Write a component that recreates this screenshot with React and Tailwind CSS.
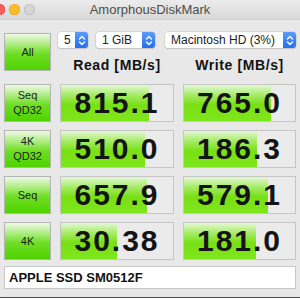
const rows = [
  { label: ["Seq", "QD32"], read: "815.1", readW: 88, write: "765.0", writeW: 87 },
  { label: ["4K", "QD32"], read: "510.0", readW: 84, write: "186.3", writeW: 73 },
  { label: ["Seq"], read: "657.9", readW: 86, write: "579.1", writeW: 84 },
  { label: ["4K"], read: "30.38", readW: 56, write: "181.0", writeW: 72 },
];

function Chevrons() {
  return (
    <svg width="8" height="11" viewBox="0 0 8 11" fill="none" stroke="white" strokeWidth="1.4" strokeLinecap="round" strokeLinejoin="round">
      <path d="M1.5 4 L4 1.5 L6.5 4" />
      <path d="M1.5 7 L4 9.5 L6.5 7" />
    </svg>
  );
}

function Select({ text, className }) {
  return (
    <div className={`flex h-[16px] items-center justify-between rounded-[3px] bg-white pl-[6px] shadow-[0_0_0_0.5px_#c4c4c4,0_1px_1px_rgba(0,0,0,0.15)] ${className}`}>
      <span className="text-[12px] leading-none text-[#222]">{text}</span>
      <div className="flex h-full w-[13px] items-center justify-center rounded-r-[3px] bg-gradient-to-b from-[#5a9cf8] to-[#1f6ff0]">
        <Chevrons />
      </div>
    </div>
  );
}

function GreenButton({ lines, className }) {
  return (
    <div
      className={`flex flex-col items-center justify-center border border-[#b4b4b4] bg-[linear-gradient(to_bottom,#eef9e6_0%,#b6ee8e_25%,#6ede24_55%,#4fd300_100%)] text-[11px] leading-[15px] text-[#1c1c1c] ${className}`}
    >
      {lines.map((l) => (
        <span key={l}>{l}</span>
      ))}
    </div>
  );
}

function Cell({ value, width }) {
  return (
    <div className="relative flex h-[38px] items-center justify-center border border-[#c6c6c6] bg-[#ebebeb]">
      <div
        className="absolute left-0 top-0 h-full bg-[linear-gradient(to_bottom,#e4f7d6_0%,#a6ec66_28%,#78e014_55%,#7ee61c_100%)]"
        style={{ width }}
      />
      <span className="relative text-[30px] font-bold leading-none tracking-[2px] text-[#141414]">
        {value}
      </span>
    </div>
  );
}

export default function App() {
  return (
    <div className="h-[300px] w-[300px] overflow-hidden bg-white font-['Liberation_Sans',Arial,sans-serif]">
      <div className="h-[298px] border-b border-[#4a4a4a] bg-[#e8e8e8]">
        <div className="relative flex h-[20px] items-center border-b border-[#cfcfcf] bg-[linear-gradient(to_bottom,#ececec,#d9d9d9)]">
          <div className="ml-[-6px] flex gap-[4px]">
            <span className="h-[11px] w-[11px] rounded-full bg-[#fc5f57] shadow-[inset_0_0_0_0.5px_#e0443e]" />
            <span className="h-[11px] w-[11px] rounded-full bg-[#fdbc2e] shadow-[inset_0_0_0_0.5px_#dea123]" />
            <span className="h-[11px] w-[11px] rounded-full bg-[#d6d6d6] shadow-[inset_0_0_0_1px_#c2c2c2]" />
          </div>
          <span className="absolute left-0 right-0 text-center text-[13px] text-[#4d4d4d]">
            AmorphousDiskMark
          </span>
        </div>

        <div className="px-[4px] pt-[13px]">
          <div className="flex">
            <GreenButton lines={["All"]} className="h-[38px] w-[47px]" />
            <div className="ml-[7px] mt-[-1px] flex-1">
              <div className="flex">
                <Select text="5" className="w-[30px]" />
                <Select text="1 GiB" className="ml-[8px] w-[59px]" />
                <Select text="Macintosh HD (3%)" className="ml-[10px] w-[131px]" />
              </div>
              <div className="mt-[7px] grid grid-cols-[114px_113px] gap-x-[9px] pl-[2px]">
                <div className="text-center text-[14px] font-bold tracking-[0.6px] text-[#111]">Read [MB/s]</div>
                <div className="text-center text-[14px] font-bold tracking-[0.6px] text-[#111]">Write [MB/s]</div>
              </div>
            </div>
          </div>

          <div className="mt-[8px] grid grid-cols-[47px_114px_113px] gap-x-[9px] gap-y-[8px]">
            {rows.map((r) => (
              <div key={r.read} className="contents">
                <GreenButton lines={r.label} className="h-[38px]" />
                <Cell value={r.read} width={r.readW} />
                <Cell value={r.write} width={r.writeW} />
              </div>
            ))}
          </div>

          <div className="mt-[6px] flex h-[23px] items-center border border-[#c8c8c8] bg-white px-[4px]">
            <span className="text-[13px] font-bold text-[#111]">APPLE SSD SM0512F</span>
          </div>
        </div>
      </div>
    </div>
  );
}
